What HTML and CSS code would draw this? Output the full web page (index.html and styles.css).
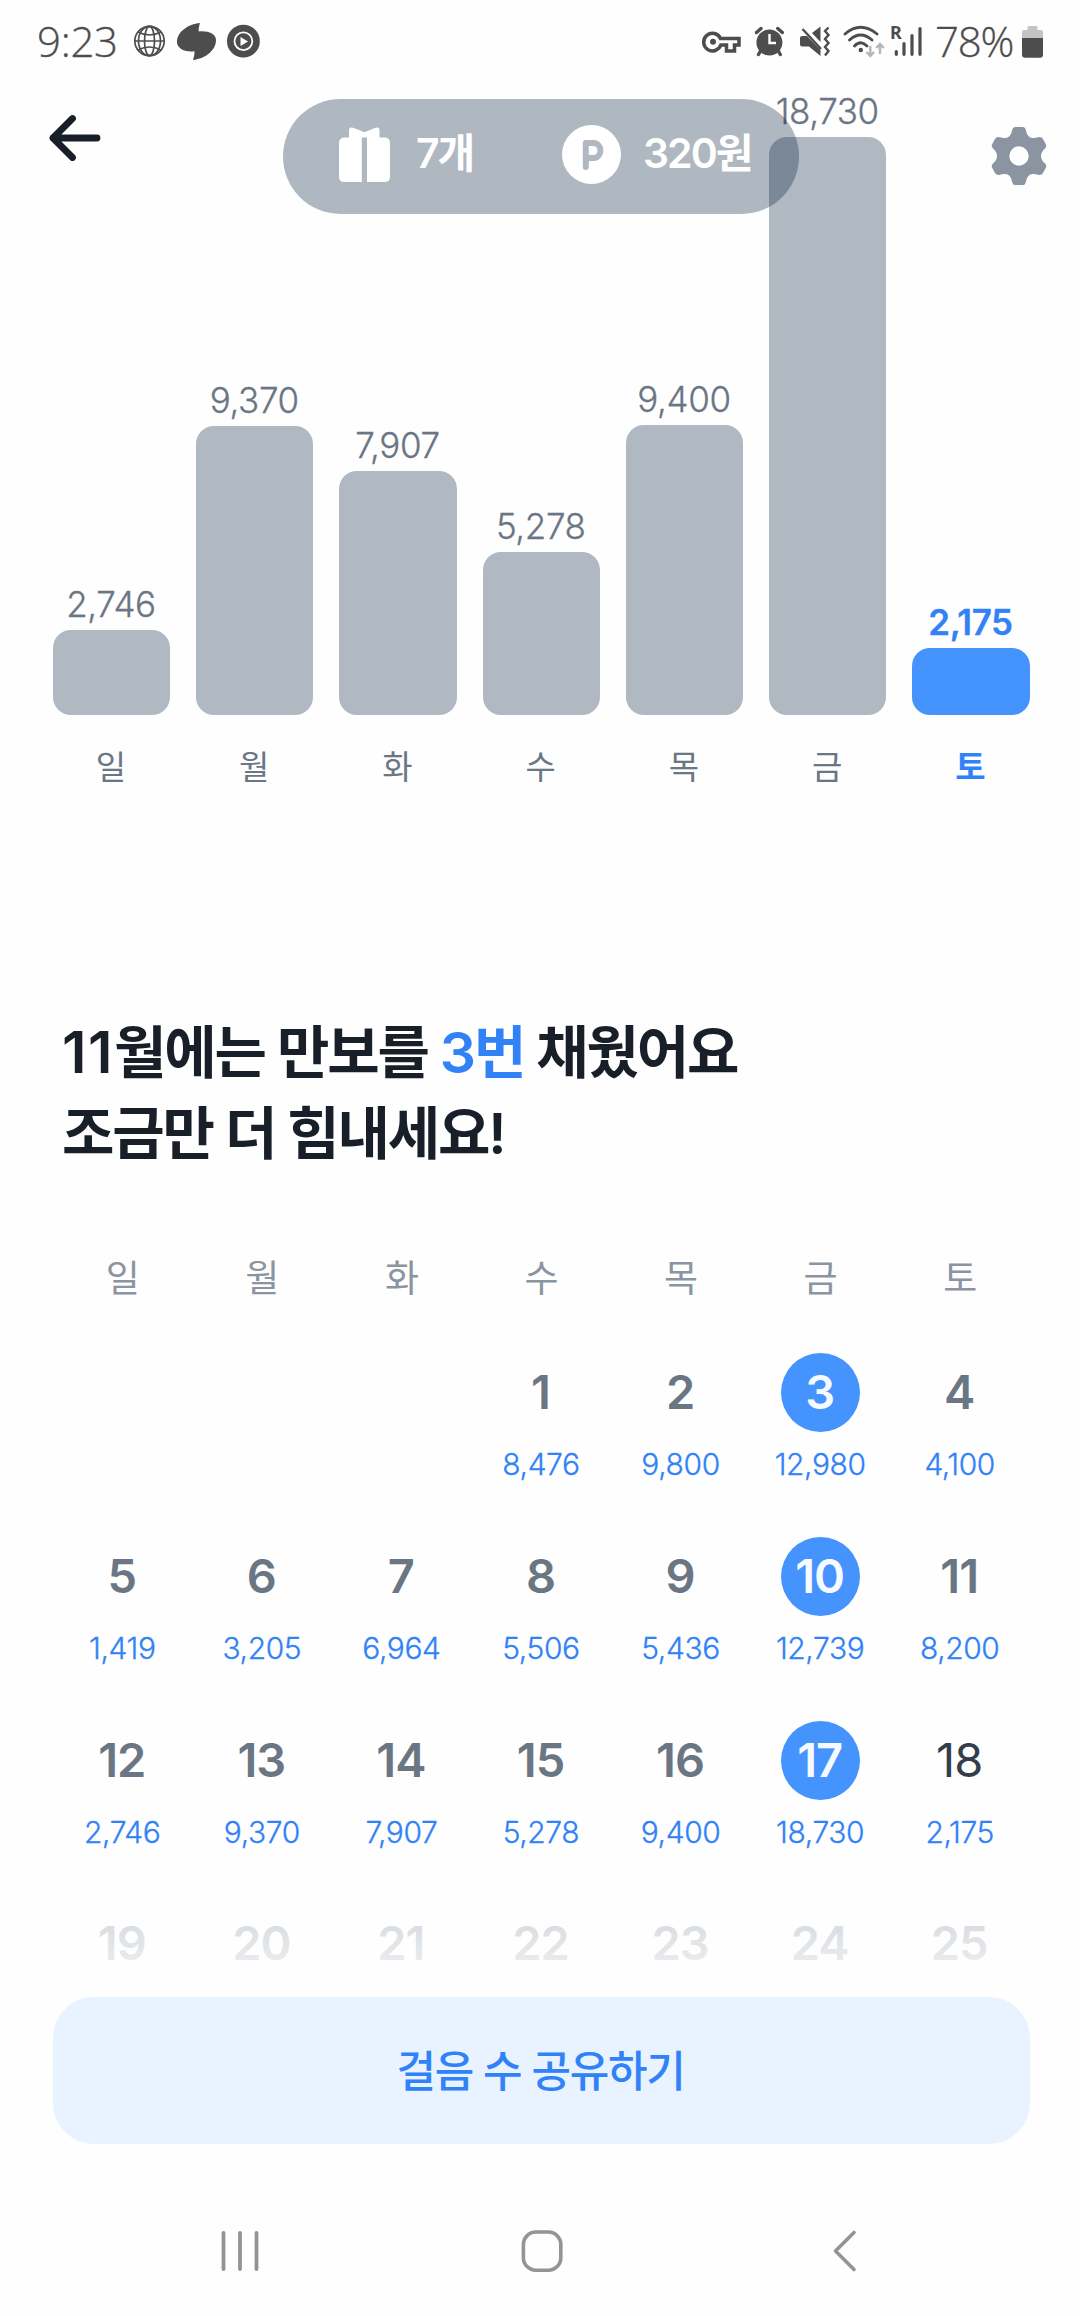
FILE: index.html
```html
<!DOCTYPE html>
<html lang="ko">
<head>
<meta charset="utf-8">
<title>만보기</title>
<link rel="stylesheet" href="styles.css">
</head>
<body>
<div class="screen">
  <header class="status">
    <span class="status-text clock">9:23</span>
    <svg class="status-left" viewBox="130 20 132 42" width="132" height="42">
      <g fill="none" stroke="#4d4d4d" stroke-width="1.7">
        <circle cx="149.5" cy="41" r="14.7"/>
        <ellipse cx="149.5" cy="41" rx="5" ry="14.7"/>
        <ellipse cx="149.5" cy="41" rx="11" ry="14.7"/>
        <path d="M135 41H164M138 32Q149.500 38 161 32M138 50Q149.500 44 161 50"/>
      </g>
      <path fill="#4d4d4d" d="M200 23C199 26 198.500 29 198.700 31.500C208 30.500 216 34 216 40C216 50 206 58.500 193 60C194 57 194.600 54 194.500 51.300C184 52.500 177 48 177 42C177 32 188 24 200 23Z"/>
      <circle cx="243.400" cy="41.200" r="16.400" fill="#4d4d4d"/>
      <circle cx="243.400" cy="41.200" r="8.900" fill="none" stroke="#fefefe" stroke-width="1.800"/>
      <path fill="#fefefe" d="M240.500 37L248 41.400L240.500 46Z"/>
    </svg>
    <svg class="status-right" viewBox="700 20 224 42" width="224" height="42">
      <path fill="none" stroke="#4d4d4d" stroke-width="3.500" d="M719.500 38.500H738V45H733.500V51H725.500V45H719.800A8.800 8.800 0 1 1 719.500 38.500Z"/>
      <circle cx="712" cy="41.700" r="3" fill="#4d4d4d"/>
      <circle cx="768.400" cy="42.500" r="13" fill="#4d4d4d"/>
      <path fill="none" stroke="#4d4d4d" stroke-width="3.400" stroke-linecap="round" d="M755.500 32.500L760 28.500M781.300 32.500L776.800 28.500M759.500 51L757.500 54.500M777.300 51L779.300 54.500"/>
      <path fill="none" stroke="#fefefe" stroke-width="2.400" d="M768.500 34V43H775"/>
      <path fill="#4d4d4d" d="M799 38Q799 36 801 36H806L819.500 50V56L808 46.500H801Q799 46.500 799 44.500ZM811 33L819.500 26.500V42Z"/>
      <path fill="none" stroke="#4d4d4d" stroke-width="2.400" d="M801.500 29L820 49"/>
      <path fill="none" stroke="#4d4d4d" stroke-width="2.400" d="M827.500 27.500L824 31L827.500 35L824 39L827.500 43L824 47L827.500 51L824 55.500"/>
      <g fill="none" stroke="#4d4d4d" stroke-width="2.800" stroke-linecap="round">
        <path d="M844 34Q859.500 20.500 876 34M848.500 40Q859.500 30 871 40M853.500 46Q859.500 39.500 866 46"/>
      </g>
      <circle cx="859.800" cy="50" r="2.200" fill="#4d4d4d"/>
      <path fill="none" stroke="#b5b5b5" stroke-width="2.400" d="M869.300 46V55.500M865.500 52L869.300 56L873 52M879 54V44.500M875.200 48L879 44L882.800 48"/>
      <text class="roaming" x="889" y="39">R</text>
      <path fill="none" stroke="#4d4d4d" stroke-width="3.200" stroke-linecap="round" d="M895.300 51.500V54.300M903 43.500V54.300M911 35.500V54.300M919 28.500V54.300"/>
    </svg>
    <span class="status-text percent">78%</span>
    <svg class="battery" viewBox="0 0 21 33" width="21" height="33">
      <path fill="#c4c4c4" d="M0 13V7Q0 5 2 5H5.500V2.500Q5.500 1 7 1H14Q15.500 1 15.500 2.500V5H19Q21 5 21 7V13Z"/>
      <path fill="#4d4d4d" d="M0 13H21V29.500Q21 32.700 18 32.700H3Q0 32.700 0 29.500Z"/>
    </svg>
  </header>

  <nav class="topbar">
    <svg class="back" viewBox="0 0 52 48" width="52" height="48">
      <path fill="none" stroke="#191f28" stroke-width="6.800" stroke-linecap="round" stroke-linejoin="round" d="M23.500 4.500L4 24L23.500 43.500M4 24H48"/>
    </svg>
    <div class="pill">
      <svg class="gift" viewBox="0 0 51 56" width="51" height="56">
        <path fill="#fff" d="M0 16Q0 10.500 5.500 10.500H10V3.500Q10 -.5 14 .8L25.500 5.200L36.500 .8Q40.500 -.5 40.500 3.500V10.500H45.500Q51 10.500 51 16V49.500Q51 55 45.500 55H28V10.500H22.800V55H5.500Q0 55 0 49.500Z"/>
      </svg>
      <span class="pill-text gifts">7개</span>
      <svg class="point" viewBox="0 0 59 59" width="59" height="59">
        <circle cx="29.500" cy="29.500" r="29.500" fill="#fff"/>
        <path fill="none" stroke="#b0b8c1" stroke-width="6" stroke-linecap="round" stroke-linejoin="round" d="M23.800 42V18H32.500A7.700 7.700 0 0 1 32.500 33H23.800"/>
      </svg>
      <span class="pill-text">320원</span>
    </div>
    <svg class="gear" viewBox="-28 -29 56 58" width="56" height="58">
      <path fill="#8b95a1" fill-rule="evenodd" d="M-4 -29H4Q6.200 -29 6.700 -26.500Q8 -19.500 12 -18.300Q15.500 -17.500 19 -18.800Q22.500 -19.800 24 -17L27 -11.500Q28 -9.500 26 -7.500Q22 -4 22 0Q22 4 26 7.500Q28 9.500 27 11.500L24 17Q22.500 19.800 19 18.800Q15.500 17.500 12 18.300Q8 19.500 6.700 26.500Q6.200 29 4 29H-4Q-6.200 29 -6.700 26.500Q-8 19.500 -12 18.300Q-15.500 17.500 -19 18.800Q-22.500 19.800 -24 17L-27 11.500Q-28 9.500 -26 7.500Q-22 4 -22 0Q-22 -4 -26 -7.500Q-28 -9.500 -27 -11.500L-24 -17Q-22.500 -19.800 -19 -18.800Q-15.500 -17.500 -12 -18.300Q-8 -19.500 -6.700 -26.500Q-6.200 -29 -4 -29ZM-9.700 0A9.700 9.700 0 1 0 9.700 0A9.700 9.700 0 1 0 -9.700 0Z"/>
    </svg>
  </nav>

  <section class="chart">
    <div class="column"><span class="value">2,746</span><i class="bar" style="height:85.300px"></i><span class="day">일</span></div>
    <div class="column"><span class="value">9,370</span><i class="bar" style="height:289.300px"></i><span class="day">월</span></div>
    <div class="column"><span class="value">7,907</span><i class="bar" style="height:244.300px"></i><span class="day">화</span></div>
    <div class="column"><span class="value">5,278</span><i class="bar" style="height:163.300px"></i><span class="day">수</span></div>
    <div class="column"><span class="value">9,400</span><i class="bar" style="height:290.300px"></i><span class="day">목</span></div>
    <div class="column"><span class="value">18,730</span><i class="bar" style="height:578.300px"></i><span class="day">금</span></div>
    <div class="column today"><span class="value">2,175</span><i class="bar" style="height:67.300px"></i><span class="day">토</span></div>
  </section>

  <h1 class="summary"><span class="month">11</span>월에는 만보를 <em>3번</em> 채웠어요<br>조금만 더 힘내세요!</h1>

  <section class="calendar">
    <div class="week names"><span>일</span><span>월</span><span>화</span><span>수</span><span>목</span><span>금</span><span>토</span></div>
    <div class="week">
      <div class="cell"></div><div class="cell"></div><div class="cell"></div>
      <div class="cell"><b>1</b><span>8,476</span></div>
      <div class="cell"><b>2</b><span>9,800</span></div>
      <div class="cell goal"><b>3</b><span>12,980</span></div>
      <div class="cell"><b>4</b><span>4,100</span></div>
    </div>
    <div class="week">
      <div class="cell"><b>5</b><span>1,419</span></div>
      <div class="cell"><b>6</b><span>3,205</span></div>
      <div class="cell"><b>7</b><span>6,964</span></div>
      <div class="cell"><b>8</b><span>5,506</span></div>
      <div class="cell"><b>9</b><span>5,436</span></div>
      <div class="cell goal"><b>10</b><span>12,739</span></div>
      <div class="cell"><b>11</b><span>8,200</span></div>
    </div>
    <div class="week">
      <div class="cell"><b>12</b><span>2,746</span></div>
      <div class="cell"><b>13</b><span>9,370</span></div>
      <div class="cell"><b>14</b><span>7,907</span></div>
      <div class="cell"><b>15</b><span>5,278</span></div>
      <div class="cell"><b>16</b><span>9,400</span></div>
      <div class="cell goal"><b>17</b><span>18,730</span></div>
      <div class="cell now"><b>18</b><span>2,175</span></div>
    </div>
    <div class="week future">
      <div class="cell"><b>19</b></div>
      <div class="cell"><b>20</b></div>
      <div class="cell"><b>21</b></div>
      <div class="cell"><b>22</b></div>
      <div class="cell"><b>23</b></div>
      <div class="cell"><b>24</b></div>
      <div class="cell"><b>25</b></div>
    </div>
  </section>

  <footer class="dock">
    <button class="share">걸음 수 공유하기</button>
    <div class="system-nav">
      <svg viewBox="0 0 44 48" width="44" height="48"><path fill="none" stroke="#949494" stroke-width="3.800" stroke-linecap="round" d="M5.500 6V42M22 6V42M38.500 6V42"/></svg>
      <svg viewBox="0 0 44 48" width="44" height="48"><rect x="3.400" y="5" width="37.400" height="38.200" rx="12.500" fill="none" stroke="#949494" stroke-width="3.600"/></svg>
      <svg viewBox="0 0 44 48" width="44" height="48"><path fill="none" stroke="#949494" stroke-width="3.600" stroke-linecap="round" stroke-linejoin="round" d="M33 5.500L14.500 24L33 42.500"/></svg>
    </div>
  </footer>
</div>
</body>
</html>
```
FILE: styles.css
```css
* { box-sizing: border-box; }

body {
  margin: 0;
  background: #fefefe;
  font-family: Inter, "Noto Sans CJK KR", sans-serif;
}

.screen {
  position: relative;
  width: 1080px;
  height: 2316px;
  overflow: hidden;
}

svg { display: block; flex: none; }

/* system status bar */
.status {
  display: flex;
  align-items: center;
  height: 82px;
  padding: 0 37px 0 37px;
}

.status-text {
  font-family: "Open Sans", "Noto Sans", sans-serif;
  font-size: 42px;
  font-weight: 350;
  line-height: 42px;
  color: #4d4d4d;
  -webkit-text-stroke: 0.300px #4d4d4d;
}

.clock { width: 93px; letter-spacing: -0.300px; }
.percent { width: 87px; letter-spacing: -1.200px; }
.status-right { margin-left: auto; margin-right: 10px; }
.roaming { font: 700 18px "Noto Sans", sans-serif; fill: #4d4d4d; }

/* floating controls over the chart */
.topbar {
  position: absolute;
  z-index: 2;
  top: 99px;
  left: 0;
  right: 0;
  display: flex;
  align-items: flex-start;
  padding: 0 33px 0 49px;
}

.back { margin-top: 15px; }

.pill {
  display: flex;
  align-items: center;
  width: 516px;
  height: 115px;
  margin-left: 182px;
  padding: 0 0 4px 56px;
  border-radius: 58px;
  background: rgba(3, 32, 62, 0.315);
}

.pill .point { margin-left: 94px; }

.pill-text {
  margin-left: 22px;
  padding-bottom: 3px;
  font-size: 41px;
  font-weight: 600;
  letter-spacing: -2px;
  line-height: 60px;
  color: #fff;
}

.gifts { width: 52px; margin-left: 26px; white-space: nowrap; }
.gear { margin: 28px 0 0 auto; }

/* weekly bars */
.chart {
  display: grid;
  grid-template-columns: repeat(7, 1fr);
  column-gap: 26.200px;
  height: 706px;
  padding: 0 50.500px 0 53px;
}

.column {
  display: flex;
  flex-direction: column;
  align-items: center;
  justify-content: flex-end;
}

.value {
  padding: 0 1px 1px 0;
  font-size: 35px;
  font-weight: 350;
  letter-spacing: -0.400px;
  line-height: 50px;
  color: #6b7684;
  white-space: nowrap;
  -webkit-text-stroke: 0.300px currentColor;
}

.bar {
  flex: none;
  width: 100%;
  border-radius: 18px;
  background: #b0b8c1;
}

.day {
  margin: 30px 0 -2px;
  padding-right: 1px;
  font-size: 33px;
  line-height: 45px;
  color: #6b7684;
}

.today .value,
.today .day { font-weight: 600; color: #3182f6; }
.today .bar { background: #4593fc; }

/* monthly headline */
.summary {
  margin: 224px 0 0 62px;
  font-size: 57px;
  font-weight: 600;
  letter-spacing: -2.200px;
  line-height: 81px;
  color: #191f28;
}

.month { font-size: 58px; letter-spacing: 1.500px; line-height: 1; }
.summary em { font-style: normal; color: #3182f6; }

/* calendar */
.calendar { padding: 73px 50px 0 53px; }

.week {
  display: grid;
  grid-template-columns: repeat(7, 1fr);
  height: 184px;
  justify-items: center;
}

.names {
  height: 106px;
  font-size: 37px;
  line-height: 63px;
  color: #8b95a1;
}

.cell {
  display: flex;
  flex-direction: column;
  align-items: center;
}

.cell b {
  width: 79px;
  height: 79px;
  padding-right: 2px;
  border-radius: 50%;
  font-size: 47px;
  font-weight: 600;
  line-height: 77px;
  letter-spacing: -1px;
  text-align: center;
  color: #6b7684;
}

.cell span {
  margin-top: 12px;
  padding-right: 1px;
  font-size: 30px;
  font-weight: 350;
  letter-spacing: -0.400px;
  line-height: 40px;
  color: #3182f6;
  -webkit-text-stroke: 0.300px currentColor;
}

.goal b { background: #4593fc; color: #f5faff; }
.now b { font-weight: 400; color: #333d4b; }
.future b { line-height: 75px; color: #d1d6db; }

/* bottom action with fade, then the system keys */
.dock {
  position: absolute;
  left: 0;
  right: 0;
  bottom: 0;
  padding: 92px 50px 0 53px;
  height: 411px;
  background: linear-gradient(rgba(254, 254, 254, 0), #fefefe 106px);
}

.share {
  display: block;
  width: 100%;
  height: 147px;
  padding: 0 2px 6px 0;
  border: 0;
  border-radius: 41px;
  background: #e8f3ff;
  font-family: inherit;
  font-size: 43px;
  font-weight: 500;
  letter-spacing: -1.300px;
  color: #3182f6;
}

.system-nav {
  display: flex;
  justify-content: space-between;
  padding: 83px 165px 0 165px;
}
```
